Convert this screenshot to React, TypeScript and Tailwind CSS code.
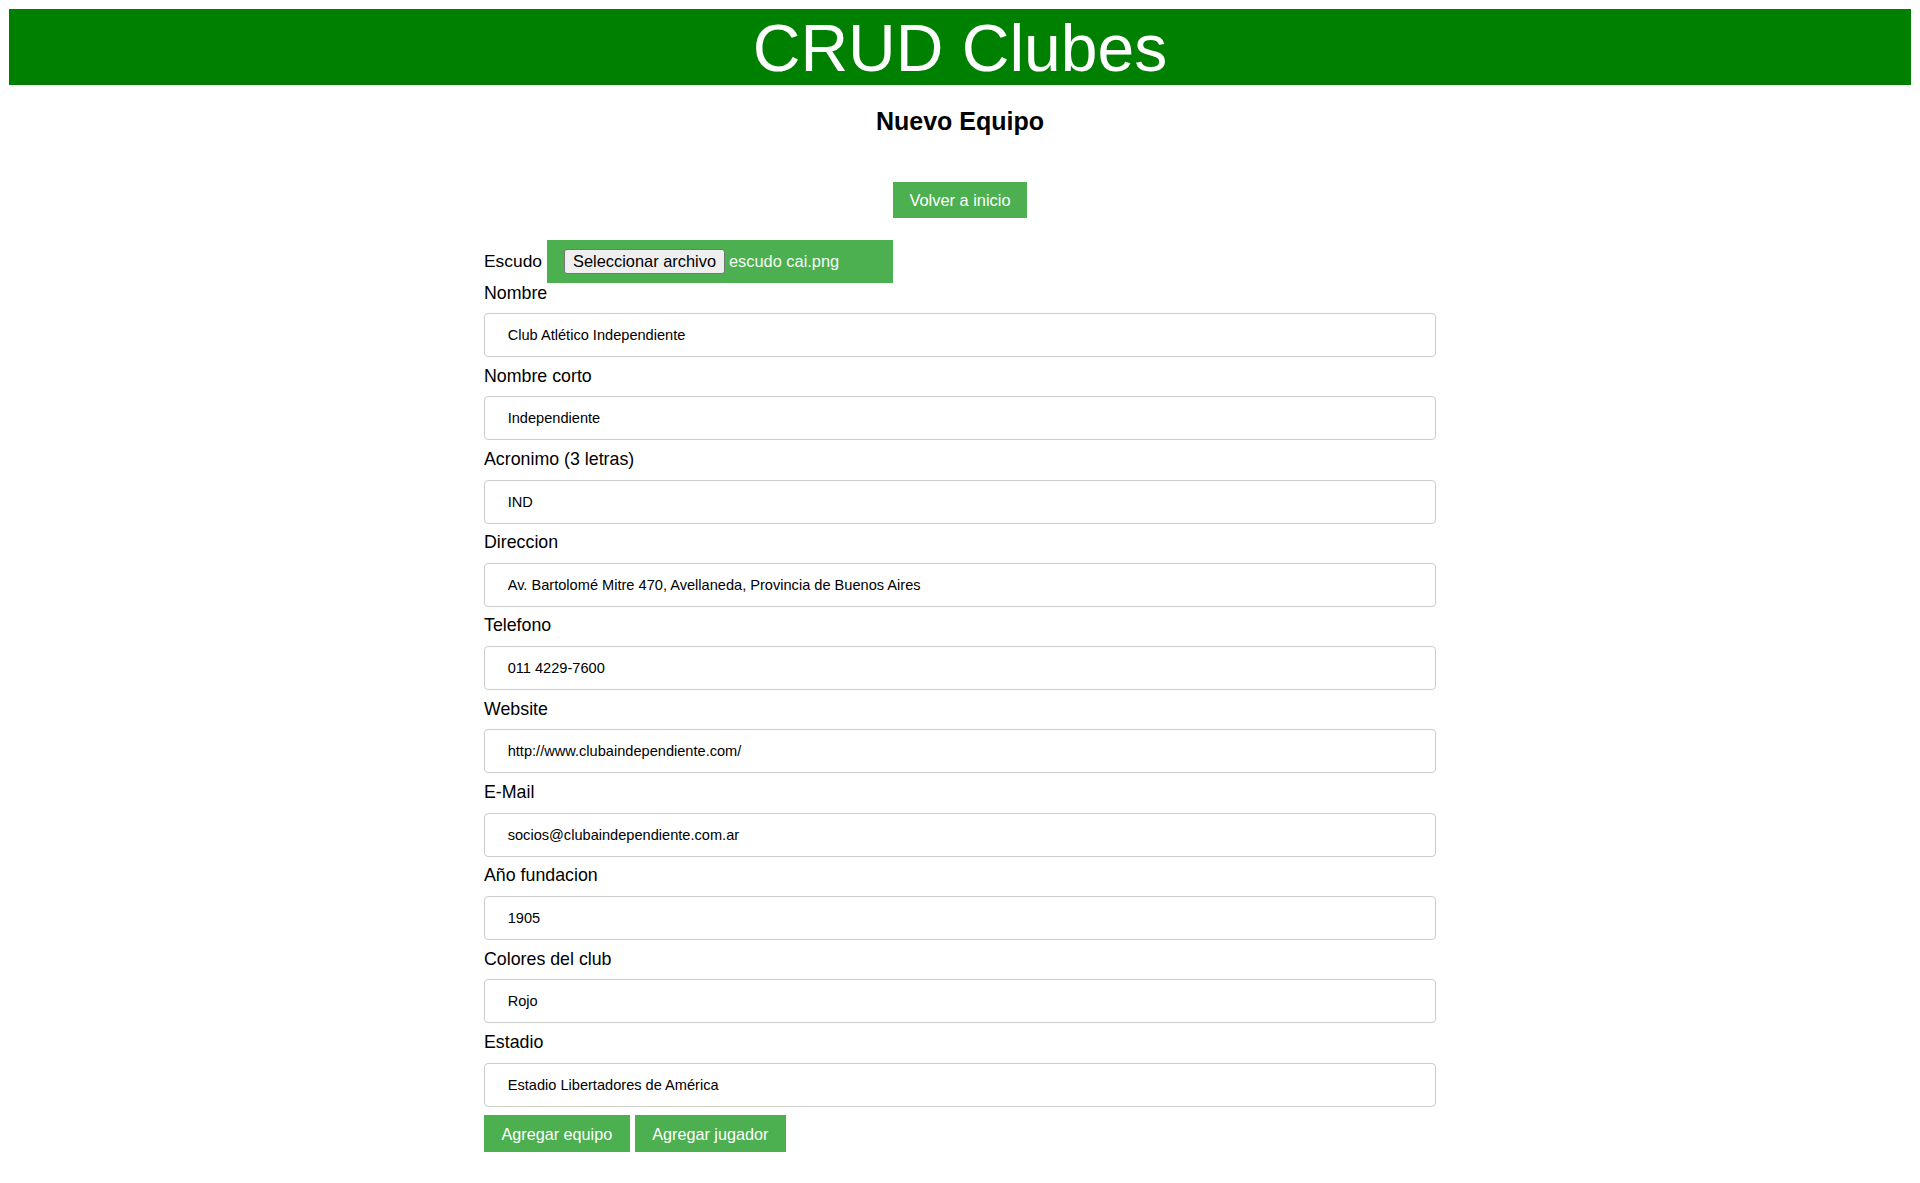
import React from "react";

const fields: { label: string; value: string }[] = [
  { label: "Nombre", value: "Club Atlético Independiente" },
  { label: "Nombre corto", value: "Independiente" },
  { label: "Acronimo (3 letras)", value: "IND" },
  { label: "Direccion", value: "Av. Bartolomé Mitre 470, Avellaneda, Provincia de Buenos Aires" },
  { label: "Telefono", value: "011 4229-7600" },
  { label: "Website", value: "http://www.clubaindependiente.com/" },
  { label: "E-Mail", value: "socios@clubaindependiente.com.ar" },
  { label: "Año fundacion", value: "1905" },
  { label: "Colores del club", value: "Rojo" },
  { label: "Estadio", value: "Estadio Libertadores de América" },
];

export default function App() {
  return (
    <div className="min-h-screen bg-white px-[9px] pt-[9px] text-black font-['Liberation_Sans',Arial,sans-serif]">
      <header className="flex h-[76px] justify-center bg-[#008000]">
        <h1 className="pt-[1px] text-[66px] font-normal leading-[76px] text-white">CRUD Clubes</h1>
      </header>
      <h2 className="mt-[22px] text-center text-[25px] font-bold leading-[29px]">Nuevo Equipo</h2>
      <div className="mt-[46px] flex justify-center">
        <button className="h-[36px] bg-[#4CAF50] px-[16.5px] text-[16.4px] leading-[18px] text-white">
          Volver a inicio
        </button>
      </div>
      <form className="mx-auto mt-[22px] w-[952px]" onSubmit={(e) => e.preventDefault()}>
        <div className="flex items-center">
          <label className="-mt-[1px] text-[17.4px] leading-[20px]">Escudo</label>
          <div className="ml-[5.4px] flex h-[43px] w-[346px] items-center bg-[#4CAF50] pl-[16.3px]">
            <span className="flex h-[25px] items-center rounded-[3px] border border-[#767676] bg-[#efefef] px-[8.3px] text-[16.4px] leading-none text-black">
              Seleccionar archivo
            </span>
            <span className="ml-[3.6px] text-[16.4px] leading-none text-[#f4fbf4]">escudo cai.png</span>
          </div>
        </div>
        {fields.map((f, i) => (
          <div key={f.label}>
            <label className="block text-[17.8px] leading-[20px]">{f.label}</label>
            <input
              readOnly
              value={f.value}
              className={
                (i === 0 ? "mt-[10px] " : "mt-[10.8px] ") +
                "mb-[8.5px] block h-[44px] w-full rounded-[4px] border border-[#ccc] bg-white pl-[22.7px] pr-[22px] text-[14.6px] text-black outline-none"
              }
            />
          </div>
        ))}
        <div className="mt-[1px] flex gap-[5px]">
          <button className="h-[36.7px] bg-[#4CAF50] px-[17.5px] text-[16.2px] leading-[18px] text-white">
            Agregar equipo
          </button>
          <button className="h-[36.7px] bg-[#4CAF50] px-[17.5px] text-[16.2px] leading-[18px] text-white">
            Agregar jugador
          </button>
        </div>
      </form>
    </div>
  );
}
